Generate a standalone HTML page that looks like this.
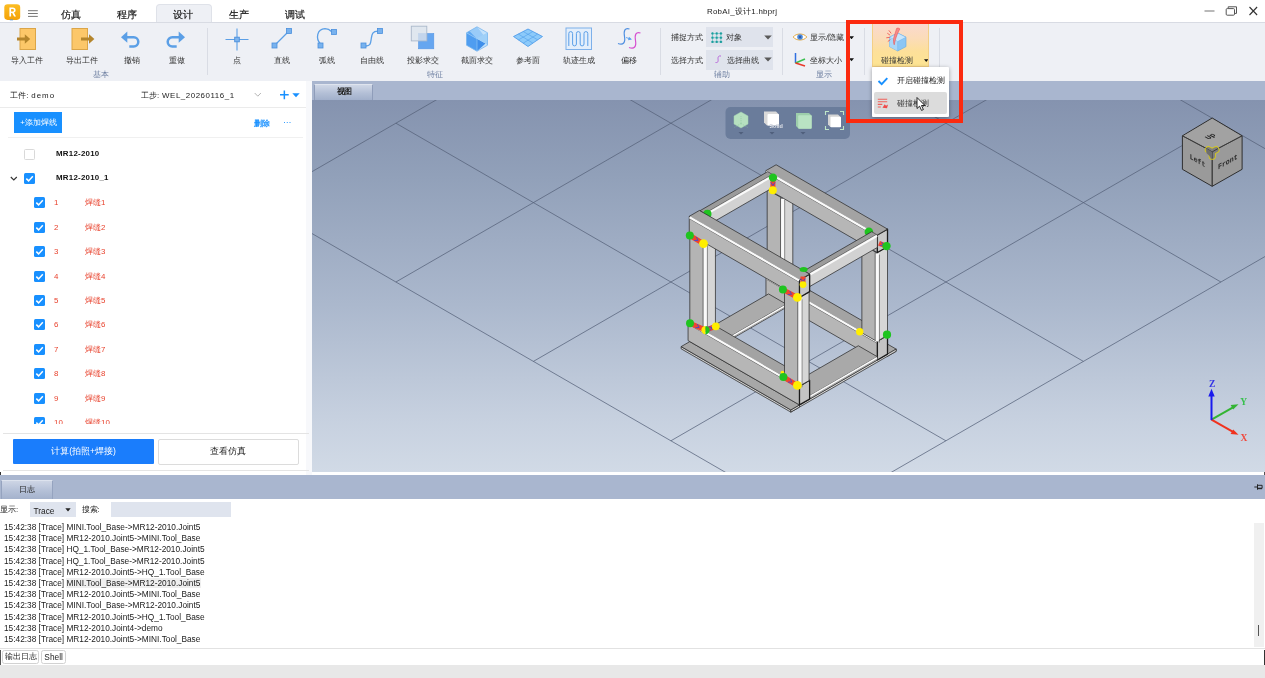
<!DOCTYPE html>
<html lang="zh">
<head>
<meta charset="utf-8">
<title>RobAI</title>
<style>
*{box-sizing:border-box;margin:0;padding:0}
html,body{width:1265px;height:678px;overflow:hidden;background:#fff}
body{position:relative;will-change:transform;font-family:"Liberation Sans",sans-serif;color:#222;font-size:8px}
.abs{position:absolute}
.t{position:absolute;white-space:nowrap;line-height:1}
/* title bar */
#title{left:0;top:0;width:1265px;height:22px;background:#fff}
.tab{position:absolute;top:7.7px;font-size:10.4px;letter-spacing:-.2px;-webkit-text-stroke:.2px #1a1a1a;color:#1a1a1a;line-height:14px;white-space:nowrap}
#tabsel{left:156px;top:4px;width:56px;height:19px;background:#eef0f5;border:1px solid #dfe2e9;border-bottom:none;border-radius:4px 4px 0 0}
/* ribbon */
#ribbon{left:0;top:22px;width:1265px;height:59px;background:#eef0f5;border-top:1px solid #d8dbe3}
.rl{position:absolute;top:56px;font-size:7.9px;color:#333;line-height:9px;white-space:nowrap;transform:translateX(-50%)}
.gl{position:absolute;top:70px;font-size:7.9px;color:#6f80a2;line-height:9px;white-space:nowrap;transform:translateX(-50%)}
.sep{position:absolute;top:28px;width:1px;height:47px;background:#d9dce4}
.ico{position:absolute}
.combo{position:absolute;left:706px;width:67px;height:20px;background:#dfe3ec}
.sl{position:absolute;font-size:7.9px;color:#333;line-height:9px;white-space:nowrap}
/* left panel */
#left{left:0;top:81px;width:306px;height:394px;background:#fff}
#split{left:306px;top:81px;width:6px;height:394px;background:#f7f8fb}
.hl{position:absolute;height:1px;background:#ebebeb}
.cb{position:absolute;width:11px;height:11px;border-radius:1.5px;background:#1890ff}
.cb svg{position:absolute;left:0;top:0}
.rn{position:absolute;font-size:7.9px;color:#e8432e;line-height:9px;white-space:nowrap}
/* viewport */
#vtabs{left:312px;top:81px;width:953px;height:19px;background:#a9b6cf}
#view{left:312px;top:100px;width:953px;height:372px;background:linear-gradient(#8593af 0%,#91a0b9 20%,#abb8cd 55%,#c6d0df 85%,#d1dae6 100%);overflow:hidden}
/* log */
#logbar{left:0;top:475px;width:1265px;height:24px;background:#a9b6cf}
#log{left:0;top:499px;width:1265px;height:149px;background:#fff}
.ll{position:absolute;left:4px;font-size:8.3px;color:#1a1a1a;line-height:9px;white-space:nowrap;letter-spacing:0}
#status{left:0;top:665px;width:1265px;height:13px;background:#e8e8e8}
</style>
</head>
<body>
<!-- ================= TITLE BAR ================= -->
<div id="title" class="abs"></div>
<svg class="abs" style="left:4px;top:3.5px" width="17" height="17" viewBox="0 0 17 17">
  <defs><linearGradient id="lg" x1="0" y1="0" x2="0" y2="1"><stop offset="0" stop-color="#fcbd22"/><stop offset="1" stop-color="#f4a208"/></linearGradient></defs>
  <rect x=".3" y=".2" width="15.9" height="15.7" rx="3.3" fill="url(#lg)"/>
  <path d="M5.4 12.6V3.6h3.3c1.9 0 2.9 1 2.9 2.6 0 1.3-.7 2.1-1.7 2.4l2.1 4H10.1L8.2 8.9H7.1v3.7zM7.1 7.5h1.4c.9 0 1.4-.4 1.4-1.2S9.4 5.1 8.5 5.1H7.1z" fill="#fff"/>
  <rect x="5.8" y="15.5" width="3.2" height=".8" fill="#4a8fe0"/>
</svg>
<svg class="abs" style="left:28px;top:9px" width="11" height="9" viewBox="0 0 11 9"><path d="M0 1.7h9.8M0 4.5h9.8M0 7.4h9.8" stroke="#777" stroke-width="1"/></svg>
<div id="tabsel" class="abs"></div>
<div class="tab" style="left:61px">仿真</div>
<div class="tab" style="left:117px">程序</div>
<div class="tab" style="left:173px">设计</div>
<div class="tab" style="left:229px">生产</div>
<div class="tab" style="left:285px">调试</div>
<div class="t" style="left:707px;top:8px;font-size:7.9px;color:#222;letter-spacing:.25px">RobAI_设计1.hbprj</div>
<!-- window controls -->
<svg class="abs" style="left:1200.7px;top:4.2px" width="60" height="16" viewBox="0 0 60 16">
  <path d="M3.5 7h10" stroke="#8a8a8a" stroke-width="1.2"/>
  <path d="M27.2 4.2v-1.4h8.3v6.6h-1.7" fill="none" stroke="#555" stroke-width="1"/>
  <rect x="25.2" y="4.6" width="8.3" height="6.6" rx="1" fill="#fff" stroke="#555" stroke-width="1"/>
  <path d="M48.5 3l7.6 8M56.1 3l-7.6 8" stroke="#333" stroke-width="1.1"/>
</svg>

<!-- ================= RIBBON ================= -->
<div id="ribbon" class="abs"></div>
<svg class="abs" style="left:15px;top:26px" width="24" height="26" viewBox="0 0 24 26"><rect x="5" y="2.5" width="15.5" height="21" fill="#fcc769" stroke="#dba548" stroke-width="1"/><path d="M2 13h9.5" stroke="#b4852c" stroke-width="3"/><path d="M9.8 8.3l5.4 4.7-5.4 4.7z" fill="#b4852c"/></svg>
<svg class="abs" style="left:69px;top:26px" width="28" height="26" viewBox="0 0 28 26"><rect x="3" y="2.5" width="15.5" height="21" fill="#fcc769" stroke="#dba548" stroke-width="1"/><path d="M12 13h9.5" stroke="#b4852c" stroke-width="3"/><path d="M20 8.3l5.4 4.7-5.4 4.7z" fill="#b4852c"/></svg>
<svg class="abs" style="left:119px;top:28px" width="24" height="22" viewBox="0 0 24 22"><path d="M6.5 9.2h8.2a4.6 4.6 0 0 1 0 9.2h-4.4" fill="none" stroke="#5b9fe6" stroke-width="2.5"/><path d="M8.3 3.6L2 9.2l6.3 5.6z" fill="#5b9fe6"/></svg>
<svg class="abs" style="left:162.6px;top:28px" width="24" height="22" viewBox="0 0 24 22"><path d="M17.5 9.2H9.3a4.6 4.6 0 0 0 0 9.2h4.4" fill="none" stroke="#5b9fe6" stroke-width="2.5"/><path d="M15.7 3.6L22 9.2l-6.3 5.6z" fill="#5b9fe6"/></svg>
<svg class="abs" style="left:224px;top:27px" width="26" height="26" viewBox="0 0 26 26"><path d="M1.5 12.5h23M13 1.5v22" stroke="#5b9fe6" stroke-width="1.1"/><rect x="10.7" y="10.2" width="4.6" height="4.6" fill="#7db4ee" stroke="#4a8fdc" stroke-width=".9"/></svg>
<svg class="abs" style="left:270px;top:27px" width="24" height="24" viewBox="0 0 24 24"><path d="M4.5 18.5L19 4" stroke="#5b9fe6" stroke-width="1.3"/><rect x="2" y="16" width="5" height="5" fill="#78b2ee" stroke="#4a8fdc" stroke-width=".8"/><rect x="16.5" y="1.5" width="5" height="5" fill="#78b2ee" stroke="#4a8fdc" stroke-width=".8"/></svg>
<svg class="abs" style="left:314px;top:26px" width="26" height="26" viewBox="0 0 26 26"><path d="M6.5 18C1.3 12.5 3 3 11 2.7C14 2.7 16 4 17.8 5.8" fill="none" stroke="#5b9fe6" stroke-width="1.3"/><rect x="4" y="17" width="5" height="5" fill="#78b2ee" stroke="#4a8fdc" stroke-width=".8"/><rect x="17.5" y="3.5" width="5" height="5" fill="#78b2ee" stroke="#4a8fdc" stroke-width=".8"/></svg>
<svg class="abs" style="left:359px;top:26px" width="26" height="26" viewBox="0 0 26 26"><path d="M6.5 20C11.8 20.3 11.6 17 12.3 12.5C13 8 13.3 5.2 19 5.2" fill="none" stroke="#5b9fe6" stroke-width="1.3"/><rect x="2" y="17" width="5" height="5" fill="#78b2ee" stroke="#4a8fdc" stroke-width=".8"/><rect x="18.5" y="2.5" width="5" height="5" fill="#78b2ee" stroke="#4a8fdc" stroke-width=".8"/></svg>
<svg class="abs" style="left:410px;top:25px" width="26" height="26" viewBox="0 0 26 26"><rect x="8.5" y="8.5" width="15.3" height="15.3" fill="#66a6f0" stroke="#5596e4" stroke-width=".6"/><rect x="1.3" y="1.2" width="15.5" height="14.7" fill="#dde4ee" fill-opacity=".82" stroke="#aab8ca" stroke-width=".9"/><rect x="8.5" y="8.5" width="7.9" height="7" fill="#bfd2ea" fill-opacity=".55"/></svg>
<svg class="abs" style="left:463px;top:25px" width="28" height="28" viewBox="0 0 28 28"><path d="M14 1.8L24.5 7.8V20.2L14 26.2 3.5 20.2V7.8z" fill="#c4e2fb"/><path d="M3.5 7.8L14 13.8V26.2L3.5 20.2z" fill="#4f9df0"/><path d="M14 13.8L22.5 18.5 14 26.2z" fill="#3f8fea"/><path d="M14 13.8L24.5 7.8V20.2L22.5 18.5z" fill="#9fd0f8"/><path d="M6.5 6.1L14 13.8 20.5 10.1 14 1.8z" fill="#8fc6f7" fill-opacity=".8"/><path d="M6.5 6.1L14 13.8 3.5 7.8z" fill="#5ea8f2"/><path d="M14 1.8L24.5 7.8V20.2L14 26.2 3.5 20.2V7.8z" fill="none" stroke="#7ab6ee" stroke-width=".8"/><path d="M3.5 7.8L14 13.8 24.5 7.8M14 13.8V26.2" stroke="#9ccdf6" stroke-width=".6" fill="none"/></svg>
<svg class="abs" style="left:512px;top:27px" width="32" height="22" viewBox="0 0 32 22"><path d="M16 2L30.5 9.5 16 19.5 1.5 9.5z" fill="#8ccafa" stroke="#4596e8" stroke-width=".8"/><path d="M11.2 4.5l14.5 8.3M6.3 7l14.6 9.2M20.8 4.5L6.3 13M25.7 7L11.2 16.2" stroke="#4f9eea" stroke-width=".6"/></svg>
<svg class="abs" style="left:565px;top:27px" width="28" height="24" viewBox="0 0 28 24"><rect x="1" y="1" width="25.5" height="21.5" fill="#e3eefb" stroke="#7db0ea" stroke-width="1"/><path d="M3.8 19V6.5a1.9 1.9 0 0 1 3.8 0V17a1.9 1.9 0 0 0 3.8 0V6.5a1.9 1.9 0 0 1 3.8 0V17a1.9 1.9 0 0 0 3.8 0V6.5a1.9 1.9 0 0 1 3.8 0V19" fill="none" stroke="#5b9fe8" stroke-width="1"/></svg>
<svg class="abs" style="left:616px;top:26px" width="27" height="25" viewBox="0 0 27 25"><path d="M2 17.5c5.5 2 7.5-1 6.5-7S9 1.5 13.5 3" fill="none" stroke="#4f8fe0" stroke-width="1.2"/><path d="M13 21.5c5.5 2 7.5-1 6.5-7S20 5.5 24.5 7" fill="none" stroke="#d64fd0" stroke-width="1.2"/><path d="M10 11.5l4.5 1.5" stroke="#5aa2ef" stroke-width=".9"/><path d="M13 10.8l3 2.8-4 .6z" fill="#5aa2ef"/></svg>
<div class="rl" style="left:27px">导入工件</div>
<div class="rl" style="left:82px">导出工件</div>
<div class="rl" style="left:132px">撤销</div>
<div class="rl" style="left:176.5px">重做</div>
<div class="rl" style="left:237px">点</div>
<div class="rl" style="left:282px">直线</div>
<div class="rl" style="left:327px">弧线</div>
<div class="rl" style="left:372px">自由线</div>
<div class="rl" style="left:422.5px">投影求交</div>
<div class="rl" style="left:477px">截面求交</div>
<div class="rl" style="left:528px">参考面</div>
<div class="rl" style="left:579px">轨迹生成</div>
<div class="rl" style="left:629px">偏移</div>
<div class="gl" style="left:101px">基本</div>
<div class="gl" style="left:435px">特征</div>
<div class="gl" style="left:722px">辅助</div>
<div class="gl" style="left:824px">显示</div>
<div class="sep" style="left:207px"></div>
<div class="sep" style="left:660px"></div>
<div class="sep" style="left:782.4px"></div>
<div class="sep" style="left:864px"></div>
<div class="sep" style="left:939px"></div>
<div class="sl" style="left:671px;top:33px">捕捉方式</div>
<div class="sl" style="left:671px;top:55.5px">选择方式</div>
<div class="combo" style="top:27px"></div>
<div class="combo" style="top:49.5px"></div>
<div class="sl" style="left:726px;top:33px">对象</div>
<div class="sl" style="left:726.5px;top:55.5px">选择曲线</div>
<div class="sl" style="left:810px;top:33px">显示/隐藏</div>
<div class="sl" style="left:809.5px;top:55.5px">坐标大小</div>
<svg class="abs" style="left:711px;top:31.5px" width="11.5" height="11.5" viewBox="0 0 11.5 11.5"><path d="M1.5 0v11.5M5.7 0v11.5M9.9 0v11.5M0 1.5h11.5M0 5.7h11.5M0 9.9h11.5" stroke="#5fc0c0" stroke-width=".7"/><rect x="0.5" y="0.5" width="2" height="2" fill="#1a9d9d"/><rect x="0.5" y="4.7" width="2" height="2" fill="#1a9d9d"/><rect x="0.5" y="8.9" width="2" height="2" fill="#1a9d9d"/><rect x="4.7" y="0.5" width="2" height="2" fill="#1a9d9d"/><rect x="4.7" y="4.7" width="2" height="2" fill="#1a9d9d"/><rect x="4.7" y="8.9" width="2" height="2" fill="#1a9d9d"/><rect x="8.9" y="0.5" width="2" height="2" fill="#1a9d9d"/><rect x="8.9" y="4.7" width="2" height="2" fill="#1a9d9d"/><rect x="8.9" y="8.9" width="2" height="2" fill="#1a9d9d"/></svg>
<svg class="abs" style="left:713.5px;top:54px" width="8" height="10" viewBox="0 0 8 10"><path d="M1.5 8.5c3.5.5 2.5-2.5 2.5-4s.5-3 3-2.5" fill="none" stroke="#b45ad8" stroke-width=".9"/></svg>
<svg class="abs" style="left:763.7px;top:34.8px" width="8" height="5" viewBox="0 0 8 5"><path d="M.2.4h7.6L4 4.6z" fill="#5a5a5a"/></svg>
<svg class="abs" style="left:763.7px;top:57.3px" width="8" height="5" viewBox="0 0 8 5"><path d="M.2.4h7.6L4 4.6z" fill="#5a5a5a"/></svg>
<svg class="abs" style="left:791.5px;top:31px" width="16" height="12" viewBox="0 0 16 12"><path d="M1.2 6C4 2 12 2 14.8 6 12 10 4 10 1.2 6z" fill="#fff" stroke="#dfa336" stroke-width=".9"/><circle cx="8" cy="6" r="2.8" fill="#4c88d9"/><circle cx="8" cy="6" r="1.2" fill="#2a5aa8"/></svg>
<svg class="abs" style="left:793px;top:51.5px" width="14" height="15" viewBox="0 0 14 15"><path d="M2.5 1v10" stroke="#2f6fe0" stroke-width="1.5"/><path d="M2.5 11L12 7" stroke="#3bbf4f" stroke-width="1.5"/><path d="M2.5 11l9.5 3" stroke="#e8392a" stroke-width="1.5"/></svg>
<svg class="abs" style="left:848.5px;top:35.8px" width="5" height="3.5" viewBox="0 0 5 3.5"><path d="M0 .2h5L2.5 3.3z" fill="#111"/></svg>
<svg class="abs" style="left:848.5px;top:58.3px" width="5" height="3.5" viewBox="0 0 5 3.5"><path d="M0 .2h5L2.5 3.3z" fill="#111"/></svg>
<div class="abs" style="left:872px;top:23.5px;width:57px;height:43px;background:linear-gradient(#fad9cf 0%,#fbdcb8 35%,#fde09a 65%,#fde492 100%);border:1px solid #f3cf86;border-top:none"></div>
<svg class="abs" style="left:884px;top:26px" width="26" height="26" viewBox="0 0 26 26"><path d="M13.7 7l8.3 4.2v9.4l-8.3 4.4-8.2-4.4v-9.4z" fill="#8cc6f4" stroke="#5ea8e6" stroke-width=".6"/><path d="M13.7 7l8.3 4.2-8.3 4.4-8.2-4.4z" fill="#c9e6fb" stroke="#6fb2ea" stroke-width=".5"/><path d="M5.5 11.2l8.2 4.4V25l-8.2-4.4z" fill="#a9d6f8"/><path d="M13.7 15.6V25" stroke="#6fb2ea" stroke-width=".5"/><path d="M12.6 2.4c1.2-.6 2.6-.2 3.3.5-1.8 3.2-3.5 7-4.6 11.2-.5 1.8-.9 3.5-1.1 4.7-.8-2.2-.9-4.6-.5-6.9z" fill="#f58a8a" stroke="#e84848" stroke-width=".5"/><path d="M3.3 7.2l2.8 2M2.3 11.8l3.5-.5M4.8 4.3l2.4 3.1M3.8 15.5l2.6-1.9" stroke="#ef4a4a" stroke-width=".8"/></svg>
<div class="sl" style="left:897px;top:55.5px;transform:translateX(-50%);color:#333">碰撞检测</div>
<svg class="abs" style="left:923.5px;top:58.8px" width="4.5" height="3.2" viewBox="0 0 4.5 3.2"><path d="M0 .2h4.5L2.25 3z" fill="#111"/></svg>

<!-- ================= LEFT PANEL ================= -->
<div id="left" class="abs"></div>
<div id="split" class="abs"></div>
<div class="t" style="left:9.5px;top:91.7px;font-size:7.9px;color:#222;letter-spacing:.35px">工件: <span style="letter-spacing:1px">demo</span></div>
<div class="t" style="left:140.5px;top:91.7px;font-size:7.9px;color:#222;letter-spacing:.3px">工步: <span style="letter-spacing:.55px">WEL_20260116_1</span></div>
<svg class="abs" style="left:254px;top:92px" width="8" height="6" viewBox="0 0 8 6"><path d="M.7 1l3.1 3.2L6.9 1" fill="none" stroke="#b5b5b5" stroke-width="1"/></svg>
<svg class="abs" style="left:279px;top:89px" width="23" height="12" viewBox="0 0 23 12"><path d="M1 5.8h8.7M5.35 1.4v8.8" stroke="#1890ff" stroke-width="1.5"/><path d="M13.3 4.3h7.4l-3.7 3.9z" fill="#1890ff"/></svg>
<div class="hl" style="left:0;top:106.5px;width:306px"></div>
<div class="abs" style="left:14.2px;top:112px;width:48.3px;height:21px;background:#1890ff"></div>
<div class="t" style="left:38.5px;top:119.2px;font-size:7.9px;color:#fff;transform:translateX(-50%)">+添加焊线</div>
<div class="t" style="left:253.5px;top:119.7px;font-size:7.9px;color:#1890ff;font-weight:bold">删除</div>
<div class="t" style="left:283px;top:117.7px;font-size:9px;color:#1890ff;letter-spacing:-.2px">···</div>
<div class="hl" style="left:8px;top:137px;width:295px;background:#f0f0f0"></div>
<div class="abs" style="left:0;top:140px;width:306px;height:283.5px;overflow:hidden">
<div class="abs" style="left:24px;top:8.5px;width:11px;height:11px;border:1px solid #d9d9d9;border-radius:1.5px;background:#fff"></div>
<div class="t" style="left:56px;top:10px;font-size:7.9px;font-weight:bold;color:#111;letter-spacing:.25px">MR12-2010</div>
<svg class="abs" style="left:9.5px;top:35.9px" width="8" height="6" viewBox="0 0 8 6"><path d="M.8 1l3 3L6.8 1" fill="none" stroke="#333" stroke-width="1.1"/></svg>
<div class="cb" style="left:24px;top:32.9px"><svg width="11" height="11" viewBox="0 0 11 11"><path d="M2.3 5.6l2.3 2.3 4.2-4.6" fill="none" stroke="#fff" stroke-width="1.5"/></svg></div>
<div class="t" style="left:56px;top:34.4px;font-size:7.9px;font-weight:bold;color:#111;letter-spacing:.25px">MR12-2010_1</div>
<div class="cb" style="left:34px;top:57.3px"><svg width="11" height="11" viewBox="0 0 11 11"><path d="M2.3 5.6l2.3 2.3 4.2-4.6" fill="none" stroke="#fff" stroke-width="1.5"/></svg></div>
<div class="rn" style="left:54px;top:58.3px">1</div>
<div class="rn" style="left:85px;top:58.3px">焊缝1</div>
<div class="cb" style="left:34px;top:81.7px"><svg width="11" height="11" viewBox="0 0 11 11"><path d="M2.3 5.6l2.3 2.3 4.2-4.6" fill="none" stroke="#fff" stroke-width="1.5"/></svg></div>
<div class="rn" style="left:54px;top:82.7px">2</div>
<div class="rn" style="left:85px;top:82.7px">焊缝2</div>
<div class="cb" style="left:34px;top:106.1px"><svg width="11" height="11" viewBox="0 0 11 11"><path d="M2.3 5.6l2.3 2.3 4.2-4.6" fill="none" stroke="#fff" stroke-width="1.5"/></svg></div>
<div class="rn" style="left:54px;top:107.1px">3</div>
<div class="rn" style="left:85px;top:107.1px">焊缝3</div>
<div class="cb" style="left:34px;top:130.5px"><svg width="11" height="11" viewBox="0 0 11 11"><path d="M2.3 5.6l2.3 2.3 4.2-4.6" fill="none" stroke="#fff" stroke-width="1.5"/></svg></div>
<div class="rn" style="left:54px;top:131.5px">4</div>
<div class="rn" style="left:85px;top:131.5px">焊缝4</div>
<div class="cb" style="left:34px;top:154.9px"><svg width="11" height="11" viewBox="0 0 11 11"><path d="M2.3 5.6l2.3 2.3 4.2-4.6" fill="none" stroke="#fff" stroke-width="1.5"/></svg></div>
<div class="rn" style="left:54px;top:155.9px">5</div>
<div class="rn" style="left:85px;top:155.9px">焊缝5</div>
<div class="cb" style="left:34px;top:179.3px"><svg width="11" height="11" viewBox="0 0 11 11"><path d="M2.3 5.6l2.3 2.3 4.2-4.6" fill="none" stroke="#fff" stroke-width="1.5"/></svg></div>
<div class="rn" style="left:54px;top:180.3px">6</div>
<div class="rn" style="left:85px;top:180.3px">焊缝6</div>
<div class="cb" style="left:34px;top:203.7px"><svg width="11" height="11" viewBox="0 0 11 11"><path d="M2.3 5.6l2.3 2.3 4.2-4.6" fill="none" stroke="#fff" stroke-width="1.5"/></svg></div>
<div class="rn" style="left:54px;top:204.7px">7</div>
<div class="rn" style="left:85px;top:204.7px">焊缝7</div>
<div class="cb" style="left:34px;top:228.1px"><svg width="11" height="11" viewBox="0 0 11 11"><path d="M2.3 5.6l2.3 2.3 4.2-4.6" fill="none" stroke="#fff" stroke-width="1.5"/></svg></div>
<div class="rn" style="left:54px;top:229.1px">8</div>
<div class="rn" style="left:85px;top:229.1px">焊缝8</div>
<div class="cb" style="left:34px;top:252.5px"><svg width="11" height="11" viewBox="0 0 11 11"><path d="M2.3 5.6l2.3 2.3 4.2-4.6" fill="none" stroke="#fff" stroke-width="1.5"/></svg></div>
<div class="rn" style="left:54px;top:253.5px">9</div>
<div class="rn" style="left:85px;top:253.5px">焊缝9</div>
<div class="cb" style="left:34px;top:276.9px"><svg width="11" height="11" viewBox="0 0 11 11"><path d="M2.3 5.6l2.3 2.3 4.2-4.6" fill="none" stroke="#fff" stroke-width="1.5"/></svg></div>
<div class="rn" style="left:54px;top:277.9px">10</div>
<div class="rn" style="left:85px;top:277.9px">焊缝10</div>
</div>
<div class="hl" style="left:3px;top:433px;width:306px;background:#e4e4e4"></div>
<div class="abs" style="left:13px;top:439px;width:141px;height:25px;background:#1a7dfc;border-radius:1px"></div>
<div class="t" style="left:83.5px;top:446.5px;font-size:8.6px;color:#fff;transform:translateX(-50%)">计算(拍照+焊接)</div>
<div class="abs" style="left:158px;top:438.5px;width:140.5px;height:26px;background:#fff;border:1px solid #dcdcdc;border-radius:2px"></div>
<div class="t" style="left:228px;top:447px;font-size:8.6px;color:#222;transform:translateX(-50%)">查看仿真</div>
<div class="hl" style="left:3px;top:469.5px;width:306px;background:#e4e4e4"></div>
<div class="abs" style="left:0;top:472px;width:1px;height:3px;background:#333"></div>

<!-- ================= VIEWPORT ================= -->
<div id="vtabs" class="abs"></div>
<div class="abs" style="left:314px;top:83.5px;width:59px;height:16.5px;background:linear-gradient(#cfd7e6,#b3bfd6 55%,#a2b0cb);border:1px solid #8f9dba;border-bottom:none;border-top-color:#dfe4ee"></div>
<div class="t" style="left:336.5px;top:88.3px;font-size:7.6px;font-weight:bold;color:#222;letter-spacing:-.6px">视图</div>
<div id="view" class="abs">
<svg class="abs" style="left:0;top:0" width="953" height="372" viewBox="0 0 953 372">
<path d="M-53.6 102.6L496.4 420.2M83.9 23.2L633.9 340.8M221.4 -56.2L771.4 261.4M358.9 -135.6L908.9 182M496.4 -215L1046.4 102.6M-53.6 102.6L496.4 -215M83.9 182L633.9 -135.6M221.4 261.4L771.4 -56.2M358.9 340.8L908.9 23.2M496.4 420.2L1046.4 102.6" stroke="#56627a" stroke-width=".75" fill="none"/>
<polygon points="465.83,192.98 575.51,256.3 575.51,254.1 465.83,190.78" fill="#c8c8c8" stroke="#2c2c2c" stroke-width="0.75" stroke-linejoin="round"/>
<polygon points="575.51,256.3 584.17,251.3 584.17,249.1 575.51,254.1" fill="#d4d4d4" stroke="#2c2c2c" stroke-width="0.75" stroke-linejoin="round"/>
<polygon points="465.83,190.78 575.51,254.1 584.17,249.1 474.49,185.78" fill="#a8a8a8" stroke="#2c2c2c" stroke-width="0.75" stroke-linejoin="round"/>
<polygon points="478.82,312.12 584.17,251.3 584.17,249.1 478.82,309.93" fill="#d4d4d4" stroke="#2c2c2c" stroke-width="0.75" stroke-linejoin="round"/>
<polygon points="453.96,195.62 565.38,259.95 565.38,241.15 453.96,176.82" fill="#b6b6b6" stroke="#2c2c2c" stroke-width="0.75" stroke-linejoin="round"/>
<polygon points="565.38,259.95 575.51,254.1 575.51,235.3 565.38,241.15" fill="#c4c4c4" stroke="#1c1c1c" stroke-width="1.3" stroke-linejoin="round"/>
<polygon points="453.96,176.82 565.38,241.15 575.51,235.3 464.1,170.98" fill="#a3a3a3" stroke="#2c2c2c" stroke-width="0.75" stroke-linejoin="round"/>
<path d="M454.31 179.13L565.03 243.05" stroke="#555" stroke-width="0.8" stroke-linecap="butt"/>
<path d="M454.31 177.73L565.03 241.65" stroke="#fafafa" stroke-width="2.2" stroke-linecap="butt"/>
<polygon points="388.8,236.25 406.55,246.5 406.55,243.3 388.8,233.05" fill="#b6b6b6" stroke="#2c2c2c" stroke-width="0.75" stroke-linejoin="round"/>
<polygon points="406.55,246.5 474.32,207.38 474.32,204.18 406.55,243.3" fill="#d8d8d8" stroke="#2c2c2c" stroke-width="0.75" stroke-linejoin="round"/>
<polygon points="388.8,233.05 406.55,243.3 474.32,204.18 456.56,193.93" fill="#ababab" stroke="#2c2c2c" stroke-width="0.75" stroke-linejoin="round"/>
<path d="M406.9 244L473.97 205.28" stroke="#fafafa" stroke-width="1.7" stroke-linecap="butt"/>
<path d="M406.9 245.2L473.97 206.48" stroke="#777" stroke-width="0.5" stroke-linecap="butt"/>
<polygon points="455.18,178.12 470.16,186.78 470.16,98.18 455.18,89.53" fill="#b4b4b4" stroke="#2c2c2c" stroke-width="0.75" stroke-linejoin="round"/>
<polygon points="470.16,186.78 480.81,180.62 480.81,92.03 470.16,98.18" fill="#d6d6d6" stroke="#2c2c2c" stroke-width="0.75" stroke-linejoin="round"/>
<path d="M468.51 185.52L468.51 97.52" stroke="#4a4a4a" stroke-width="0.8" stroke-linecap="butt"/>
<path d="M472.67 187.93L472.67 99.93" stroke="#5a5a5a" stroke-width="0.7" stroke-linecap="butt"/>
<path d="M470.59 186.73L470.59 98.73" stroke="#fafafa" stroke-width="3.1" stroke-linecap="butt"/>
<polygon points="478.56,288.08 497.61,299.08 497.61,295.88 478.56,284.88" fill="#b6b6b6" stroke="#2c2c2c" stroke-width="0.75" stroke-linejoin="round"/>
<polygon points="497.61,299.08 565.38,259.95 565.38,256.75 497.61,295.88" fill="#d8d8d8" stroke="#2c2c2c" stroke-width="0.75" stroke-linejoin="round"/>
<polygon points="478.56,284.88 497.61,295.88 565.38,256.75 546.32,245.75" fill="#a9a9a9" stroke="#2c2c2c" stroke-width="0.75" stroke-linejoin="round"/>
<path d="M497.96 296.57L565.03 257.85" stroke="#fafafa" stroke-width="1.7" stroke-linecap="butt"/>
<path d="M497.96 297.77L565.03 259.05" stroke="#777" stroke-width="0.5" stroke-linecap="butt"/>
<polygon points="549.87,232.8 564.86,241.45 564.86,152.85 549.87,144.2" fill="#b4b4b4" stroke="#2c2c2c" stroke-width="0.75" stroke-linejoin="round"/>
<polygon points="564.86,241.45 575.51,235.3 575.51,146.7 564.86,152.85" fill="#d6d6d6" stroke="#2c2c2c" stroke-width="0.75" stroke-linejoin="round"/>
<path d="M563.21 240.2L563.21 152.2" stroke="#4a4a4a" stroke-width="0.8" stroke-linecap="butt"/>
<path d="M567.37 242.6L567.37 154.6" stroke="#5a5a5a" stroke-width="0.7" stroke-linecap="butt"/>
<path d="M565.29 241.4L565.29 153.4" stroke="#fafafa" stroke-width="3.1" stroke-linecap="butt"/>
<polygon points="453.96,88.22 565.38,152.55 565.38,134.95 453.96,70.62" fill="#b6b6b6" stroke="#2c2c2c" stroke-width="0.75" stroke-linejoin="round"/>
<polygon points="565.38,152.55 575.51,146.7 575.51,129.1 565.38,134.95" fill="#c9c9c9" stroke="#1c1c1c" stroke-width="1.3" stroke-linejoin="round"/>
<polygon points="453.96,70.62 565.38,134.95 575.51,129.1 464.1,64.78" fill="#a3a3a3" stroke="#2c2c2c" stroke-width="0.75" stroke-linejoin="round"/>
<path d="M454.31 72.93L565.03 136.85" stroke="#555" stroke-width="0.8" stroke-linecap="butt"/>
<path d="M454.31 71.53L565.03 135.45" stroke="#fafafa" stroke-width="2.2" stroke-linecap="butt"/>
<polygon points="369.14,248.8 478.82,312.12 478.82,309.93 369.14,246.6" fill="#cdcdcd" stroke="#2c2c2c" stroke-width="0.75" stroke-linejoin="round"/>
<polygon points="478.82,312.12 487.48,307.12 487.48,304.93 478.82,309.93" fill="#d6d6d6" stroke="#2c2c2c" stroke-width="0.75" stroke-linejoin="round"/>
<polygon points="369.14,246.6 478.82,309.93 487.48,304.93 377.8,241.6" fill="#a7a7a7" stroke="#2c2c2c" stroke-width="0.75" stroke-linejoin="round"/>
<polygon points="376.07,240.6 487.48,304.93 487.48,286.12 376.07,221.8" fill="#b6b6b6" stroke="#2c2c2c" stroke-width="0.75" stroke-linejoin="round"/>
<polygon points="487.48,304.93 497.61,299.08 497.61,280.28 487.48,286.12" fill="#c4c4c4" stroke="#1c1c1c" stroke-width="1.3" stroke-linejoin="round"/>
<polygon points="376.07,221.8 487.48,286.12 497.61,280.28 386.2,215.95" fill="#a3a3a3" stroke="#2c2c2c" stroke-width="0.75" stroke-linejoin="round"/>
<path d="M376.41 224.1L487.13 288.03" stroke="#555" stroke-width="0.8" stroke-linecap="butt"/>
<path d="M376.41 222.7L487.13 286.62" stroke="#fafafa" stroke-width="2.2" stroke-linecap="butt"/>
<polygon points="377.8,222.8 392.78,231.45 392.78,142.85 377.8,134.2" fill="#b4b4b4" stroke="#2c2c2c" stroke-width="0.75" stroke-linejoin="round"/>
<polygon points="392.78,231.45 403.43,225.3 403.43,136.7 392.78,142.85" fill="#d6d6d6" stroke="#2c2c2c" stroke-width="0.75" stroke-linejoin="round"/>
<path d="M391.14 230.2L391.14 142.2" stroke="#4a4a4a" stroke-width="0.8" stroke-linecap="butt"/>
<path d="M395.29 232.6L395.29 144.6" stroke="#5a5a5a" stroke-width="0.7" stroke-linecap="butt"/>
<path d="M393.21 231.4L393.21 143.4" stroke="#fafafa" stroke-width="3.1" stroke-linecap="butt"/>
<polygon points="387.93,123.25 393.56,126.5 393.56,114 387.93,110.75" fill="#b0b0b0" stroke="#2c2c2c" stroke-width="0.75" stroke-linejoin="round"/>
<polygon points="393.56,126.5 461.33,87.38 461.33,74.88 393.56,114" fill="#d2d2d2" stroke="#2c2c2c" stroke-width="0.75" stroke-linejoin="round"/>
<polygon points="387.93,110.75 393.56,114 461.33,74.88 455.7,71.62" fill="#9b9b9b" stroke="#2c2c2c" stroke-width="0.75" stroke-linejoin="round"/>
<path d="M393.91 112.8L460.98 74.08" stroke="#555" stroke-width="0.8" stroke-linecap="butt"/>
<path d="M393.91 114.4L460.98 75.68" stroke="#fafafa" stroke-width="2.2" stroke-linecap="butt"/>
<circle cx="556.9" cy="131.9" r="4.3" fill="#1fc41f"/>
<polygon points="491.98,183.33 497.61,186.58 497.61,174.08 491.98,170.83" fill="#b0b0b0" stroke="#2c2c2c" stroke-width="0.75" stroke-linejoin="round"/>
<polygon points="497.61,186.58 565.38,147.45 565.38,134.95 497.61,174.08" fill="#d2d2d2" stroke="#2c2c2c" stroke-width="0.75" stroke-linejoin="round"/>
<polygon points="491.98,170.83 497.61,174.08 565.38,134.95 559.75,131.7" fill="#9b9b9b" stroke="#2c2c2c" stroke-width="0.75" stroke-linejoin="round"/>
<path d="M497.96 172.88L565.03 134.15" stroke="#555" stroke-width="0.8" stroke-linecap="butt"/>
<path d="M497.96 174.48L565.03 135.75" stroke="#fafafa" stroke-width="2.2" stroke-linecap="butt"/>
<polygon points="472.5,277.48 487.48,286.12 487.48,197.52 472.5,188.88" fill="#b4b4b4" stroke="#2c2c2c" stroke-width="0.75" stroke-linejoin="round"/>
<polygon points="487.48,286.12 497.09,280.57 497.09,191.98 487.48,197.52" fill="#d6d6d6" stroke="#2c2c2c" stroke-width="0.75" stroke-linejoin="round"/>
<path d="M485.83 284.88L485.83 196.88" stroke="#4a4a4a" stroke-width="0.8" stroke-linecap="butt"/>
<path d="M489.99 287.27L489.99 199.27" stroke="#5a5a5a" stroke-width="0.7" stroke-linecap="butt"/>
<path d="M487.91 286.07L487.91 198.07" stroke="#fafafa" stroke-width="3.1" stroke-linecap="butt"/>
<circle cx="395.4" cy="113.9" r="4.1" fill="#1fc41f"/>
<polygon points="377.28,133.9 487.48,197.52 487.48,179.93 377.28,116.3" fill="#b6b6b6" stroke="#2c2c2c" stroke-width="0.75" stroke-linejoin="round"/>
<polygon points="487.48,197.52 497.61,191.68 497.61,174.08 487.48,179.93" fill="#c6c6c6" stroke="#1c1c1c" stroke-width="1.3" stroke-linejoin="round"/>
<polygon points="377.28,116.3 487.48,179.93 497.61,174.08 387.41,110.45" fill="#a3a3a3" stroke="#2c2c2c" stroke-width="0.75" stroke-linejoin="round"/>
<path d="M377.63 118.6L487.13 181.83" stroke="#555" stroke-width="0.8" stroke-linecap="butt"/>
<path d="M377.63 117.2L487.13 180.43" stroke="#fafafa" stroke-width="2.2" stroke-linecap="butt"/>
<path d="M461 77.6L460.8 90.3" stroke="#f0452e" stroke-width="5"/>
<path d="M458.83 82.32L460.87 85.55L463.02 82.38" fill="none" stroke="#3c48d6" stroke-width=".9"/>
<circle cx="461" cy="77.6" r="4.2" fill="#1fc41f"/>
<circle cx="460.8" cy="90.3" r="4" fill="#ffee00"/>
<path d="M377.8 135.5L391.5 143.6" stroke="#f0452e" stroke-width="5"/>
<path d="M382.2 140.54L386.03 140.36L384.34 136.93" fill="none" stroke="#3c48d6" stroke-width=".9"/>
<circle cx="377.8" cy="135.5" r="4" fill="#1fc41f"/>
<circle cx="391.5" cy="143.6" r="4.4" fill="#ffee00"/>
<path d="M470.9 189.6L485.4 197.4" stroke="#f0452e" stroke-width="5"/>
<path d="M475.75 194.59L479.56 194.26L477.74 190.89" fill="none" stroke="#3c48d6" stroke-width=".9"/>
<circle cx="470.9" cy="189.6" r="4" fill="#1fc41f"/>
<circle cx="485.4" cy="197.4" r="4.4" fill="#ffee00"/>
<path d="M393.5 230.1L403.8 226.3" stroke="#f0452e" stroke-width="5"/>
<path d="M397.88 230.72L400.15 227.65L396.42 226.78" fill="none" stroke="#3c48d6" stroke-width=".9"/>
<circle cx="403.8" cy="226.3" r="3.9" fill="#ffee00"/>
<path d="M378 223.2L393.5 230.1" stroke="#f0452e" stroke-width="5"/>
<path d="M383.43 227.92L387.21 227.3L385.14 224.08" fill="none" stroke="#3c48d6" stroke-width=".9"/>
<circle cx="378" cy="223.2" r="4" fill="#1fc41f"/>
<path d="M393.5 225.9a4.2 4.2 0 0 0 0 8.4z" fill="#ffee00"/>
<path d="M393.5 225.9a4.2 4.2 0 0 1 0 8.4z" fill="#1fc41f"/>
<circle cx="470.4" cy="272.6" r="1.8" fill="#ffee00"/>
<path d="M471.4 277L485.4 285.4" stroke="#f0452e" stroke-width="5"/>
<path d="M475.95 282.18L479.77 282.02L478.11 278.58" fill="none" stroke="#3c48d6" stroke-width=".9"/>
<circle cx="471.4" cy="277" r="4" fill="#1fc41f"/>
<circle cx="485.4" cy="285.4" r="4.4" fill="#ffee00"/>
<path d="M491 176.5L491 184" stroke="#f0452e" stroke-width="5"/>
<path d="M488.9 178.65L491 181.85L493.1 178.65" fill="none" stroke="#3c48d6" stroke-width=".9"/>
<circle cx="491" cy="184.6" r="3.4" fill="#ffee00"/>
<path d="M567 143.2L573 145.6" stroke="#f0452e" stroke-width="5"/>
<path d="M567.73 145.76L571.49 144.99L569.29 141.86" fill="none" stroke="#3c48d6" stroke-width=".9"/>
<circle cx="574.5" cy="146.1" r="4.2" fill="#1fc41f"/>
<circle cx="547.7" cy="231.8" r="3.7" fill="#ffee00"/>
<circle cx="575" cy="234.7" r="4.1" fill="#1fc41f"/>
<ellipse cx="491.6" cy="169.6" rx="4" ry="2.5" fill="#1fc41f"/>
<rect x="413.5" y="7" width="124.5" height="32" rx="5" fill="#6a7c9b"/>
<path d="M422 16l7 -4 7 4v8l-7 4-7-4z" fill="#b6e0c0" stroke="#a3d4b0" stroke-width=".5"/>
<path d="M429 23.5v-7.5M429 23.5l-6.5 3.8M429 23.5l6.5 3.8" stroke="#8cc89e" stroke-width=".6" stroke-dasharray="1.2 1" fill="none"/>
<path d="M452 11.5h12l3 3v11h-12l-3-3z" fill="#d9d9d9"/>
<rect x="455.5" y="14" width="11.5" height="11.5" rx="1" fill="#fff"/>
<text x="457.5" y="27.5" font-family="Liberation Sans,sans-serif" font-size="5.4" font-weight="bold" fill="#fff" stroke="#7f8ca6" stroke-width=".2">Solid</text>
<path d="M484 13h13l2.5 2.5v13h-13l-2.5-2.5z" fill="#9dceab"/>
<rect x="486.2" y="15.2" width="13.5" height="13.5" rx="1" fill="#b9e3c3"/>
<path d="M516 14.5h10l2.5 2.5v10h-10l-2.5-2.5z" fill="#d4d4d4"/>
<rect x="518.5" y="16.7" width="10.5" height="10.5" rx=".8" fill="#fff"/>
<path d="M513.5 15v-3.5h3.5M528 11.5h3.5v3.5M513.5 26v3.5h3.5M528 29.5h3.5v-3.5" fill="none" stroke="#bfe6c8" stroke-width="1.1"/>
<path d="M426.5 32h5l-2.5 2.5z" fill="#4f5f7c"/>
<path d="M457.5 32h5l-2.5 2.5z" fill="#4f5f7c"/>
<path d="M488.5 32h5l-2.5 2.5z" fill="#4f5f7c"/>
<path d="M900.2 18 L930.1 35.8 L930.1 69.3 L900.2 86.3 L870.4 69.3 L870.4 35.8z" fill="#9a9a9a" stroke="#2e2e2e" stroke-width="1" stroke-linejoin="round"/>
<path d="M870.4 35.8 L900.2 51.6 L930.1 35.8 M900.2 51.6 L900.2 86.3" fill="none" stroke="#3a3a3a" stroke-width=".9"/>
<path d="M900.2 19 L928.6 35.8 L900.2 50.6 L871.9 35.8z" fill="#a2a2a2" stroke="none"/>
<path d="M870.4 35.8 L900.2 51.6 L930.1 35.8 M900.2 51.6 L900.2 86.3" fill="none" stroke="#3a3a3a" stroke-width=".9"/>
<path d="M900.2 51.9L896.476 49.75M900.2 51.9L903.924 49.75M900.2 51.9L900.2 56.2" stroke="#d9cb14" stroke-width="7.2" stroke-linecap="round" fill="none"/>
<path d="M900.2 51.9L896.476 49.75M900.2 51.9L903.924 49.75M900.2 51.9L900.2 56.2" stroke="#7e7e7e" stroke-width="5.4" stroke-linecap="round" fill="none"/>
<path d="M900.2 51.9 l-5.8 -3.35 M900.2 51.9 l5.8 -3.35 M900.2 51.9 v6.7" stroke="#333" stroke-width=".9"/>
<path d="M900.2 51.9 l-5.8 -3.35 L894.4 52.9 L900.2 58.6 z" fill="#6e6e6e"/>
<text font-family="Liberation Mono,monospace" font-weight="bold" font-size="7.5" fill="#262626" transform="matrix(.866 -.5 .866 .5 900.3 37.6)" text-anchor="middle">Up</text>
<text font-family="Liberation Mono,monospace" font-weight="bold" font-size="7.5" fill="#262626" transform="matrix(.866 .5 0 1 885.6 63)" text-anchor="middle">Left</text>
<text font-family="Liberation Mono,monospace" font-weight="bold" font-size="7.5" fill="#262626" transform="matrix(.866 -.5 0 1 915.8 64)" text-anchor="middle">Front</text>
<path d="M899.5 319.6L921 307.3" stroke="#33b433" stroke-width="2"/>
<path d="M926.5 304.2 L918.6 305 L921.2 309.6z" fill="#33b433"/>
<path d="M899.5 319.6L921 331.8" stroke="#f0321e" stroke-width="2"/>
<path d="M926.5 334.8 L921.2 329.4 L918.6 334z" fill="#f0321e"/>
<path d="M899.5 320.1L899.5 295" stroke="#1a1aee" stroke-width="2"/>
<path d="M899.5 288.8 L896.3 296.5 L902.7 296.5z" fill="#1a1aee"/>
<text font-family="Liberation Serif,serif" font-weight="bold" font-size="9.5" fill="#3434e6" x="897" y="287">Z</text>
<text font-family="Liberation Serif,serif" font-weight="bold" font-size="9.5" fill="#37c04d" x="928.3" y="304.8">Y</text>
<text font-family="Liberation Serif,serif" font-weight="bold" font-size="9.5" fill="#f0483c" x="928.6" y="341">X</text>
</svg>
</div>
<div class="abs" style="left:312px;top:472px;width:953px;height:3px;background:#fff"></div>

<!-- ================= LOG ================= -->
<div id="logbar" class="abs"></div>
<div class="abs" style="left:1px;top:480px;width:52px;height:19px;background:linear-gradient(#cdd5e5,#b4c0d7 55%,#a4b2cc);border:1px solid #95a3bf;border-bottom:none;border-top-color:#dde3ee"></div>
<div class="t" style="left:19px;top:485.8px;font-size:7.9px;color:#222">日志</div>
<svg class="abs" style="left:1254px;top:482.5px" width="10" height="8" viewBox="0 0 10 8"><path d="M.3 4h3.2M3.5 1.3v5.4M3.5 2.3h4.6v2.9H3.5M3.5 5.7h4.6" stroke="#1a1a1a" stroke-width=".9" fill="none"/></svg>
<div class="abs" style="left:1264px;top:472px;width:1px;height:3px;background:#555"></div>
<div id="log" class="abs"></div>
<div class="t" style="left:0;top:505.5px;font-size:7.9px;color:#222">显示:</div>
<div class="abs" style="left:30px;top:502px;width:46.3px;height:14.5px;background:#dfe4ee"></div>
<div class="t" style="left:33.5px;top:506.6px;font-size:8.3px;color:#222">Trace</div>
<svg class="abs" style="left:64.5px;top:507.5px" width="6" height="4" viewBox="0 0 6 4"><path d="M.3.3h5.4L3 3.5z" fill="#222"/></svg>
<div class="t" style="left:81.5px;top:505.5px;font-size:7.9px;color:#222">搜索:</div>
<div class="abs" style="left:111px;top:502px;width:119.5px;height:14.5px;background:#dfe4ee"></div>
<div class="ll" style="top:522.9px">15:42:38 [Trace] MINI.Tool_Base-&gt;MR12-2010.Joint5</div>
<div class="ll" style="top:534.1px">15:42:38 [Trace] MR12-2010.Joint5-&gt;MINI.Tool_Base</div>
<div class="ll" style="top:545.3px">15:42:38 [Trace] HQ_1.Tool_Base-&gt;MR12-2010.Joint5</div>
<div class="ll" style="top:556.5px">15:42:38 [Trace] HQ_1.Tool_Base-&gt;MR12-2010.Joint5</div>
<div class="ll" style="top:567.7px">15:42:38 [Trace] MR12-2010.Joint5-&gt;HQ_1.Tool_Base</div>
<div class="abs" style="left:66px;top:577.5px;width:135px;height:10.5px;background:#efefef"></div>
<div class="ll" style="top:578.9px">15:42:38 [Trace] MINI.Tool_Base-&gt;MR12-2010.Joint5</div>
<div class="ll" style="top:590.1px">15:42:38 [Trace] MR12-2010.Joint5-&gt;MINI.Tool_Base</div>
<div class="ll" style="top:601.3px">15:42:38 [Trace] MINI.Tool_Base-&gt;MR12-2010.Joint5</div>
<div class="ll" style="top:612.5px">15:42:38 [Trace] MR12-2010.Joint5-&gt;HQ_1.Tool_Base</div>
<div class="ll" style="top:623.7px">15:42:38 [Trace] MR12-2010.Joint4-&gt;demo</div>
<div class="ll" style="top:634.9px">15:42:38 [Trace] MR12-2010.Joint5-&gt;MINI.Tool_Base</div>
<div class="abs" style="left:1253.5px;top:523px;width:10.5px;height:124px;background:#f0f0f0"></div>
<div class="abs" style="left:1258px;top:624.5px;width:1px;height:11px;background:#555"></div>
<div class="hl" style="left:0;top:648px;width:1265px;background:#e2e2e2"></div>
<div class="abs" style="left:1.8px;top:650px;width:37.5px;height:13.7px;border:1px solid #d2d2d2;border-radius:2.5px;background:#fff"></div>
<div class="t" style="left:20.5px;top:653px;font-size:7.9px;color:#222;transform:translateX(-50%)">输出日志</div>
<div class="abs" style="left:41px;top:650px;width:25.3px;height:13.7px;border:1px solid #d2d2d2;border-radius:2.5px;background:#fff"></div>
<div class="t" style="left:53.6px;top:653px;font-size:8.3px;color:#222;transform:translateX(-50%)">Shell</div>
<div class="abs" style="left:0;top:650px;width:1px;height:15px;background:#555"></div>
<div class="abs" style="left:1263.5px;top:650px;width:1.5px;height:15px;background:#333"></div>
<div id="status" class="abs"></div>
<div class="abs" style="left:872px;top:67px;width:77px;height:50px;background:#fff;box-shadow:0 1px 4px rgba(0,0,0,.35);border-radius:1px"></div>
<svg class="abs" style="left:876.5px;top:75.5px" width="12" height="10" viewBox="0 0 12 10"><path d="M1.5 5l3.2 3.2L10.3 2.2" fill="none" stroke="#1890ff" stroke-width="1.9"/></svg>
<div class="sl" style="left:897px;top:76px;color:#222">开启碰撞检测</div>
<div class="abs" style="left:874px;top:92px;width:72.5px;height:22px;background:#dcdcdc;border-radius:2px"></div>
<svg class="abs" style="left:876.5px;top:98px" width="12" height="11" viewBox="0 0 12 11"><path d="M.8 1.2h9.4M.8 3.8h9.4M.8 6.4h4.5M.8 9h3" stroke="#f0605a" stroke-width="1.1"/><path d="M5.5 9.8l2.2-3.6 1.3 1.6 2-1.2-1 3.6z" fill="#ef4a4a"/></svg>
<div class="sl" style="left:897px;top:98.5px;color:#333">碰撞检测</div>
<svg class="abs" style="left:914.5px;top:95.5px" width="11" height="16" viewBox="0 0 11 16"><path d="M2 1.5v11l2.6-2.3 1.9 4.2 1.9-.8-1.9-4.1h3.4z" fill="#fff" stroke="#111" stroke-width=".9" stroke-linejoin="round"/></svg>
<div class="abs" style="left:846px;top:20px;width:117px;height:103px;border:4px solid #fb2a0f"></div>
</body>
</html>
